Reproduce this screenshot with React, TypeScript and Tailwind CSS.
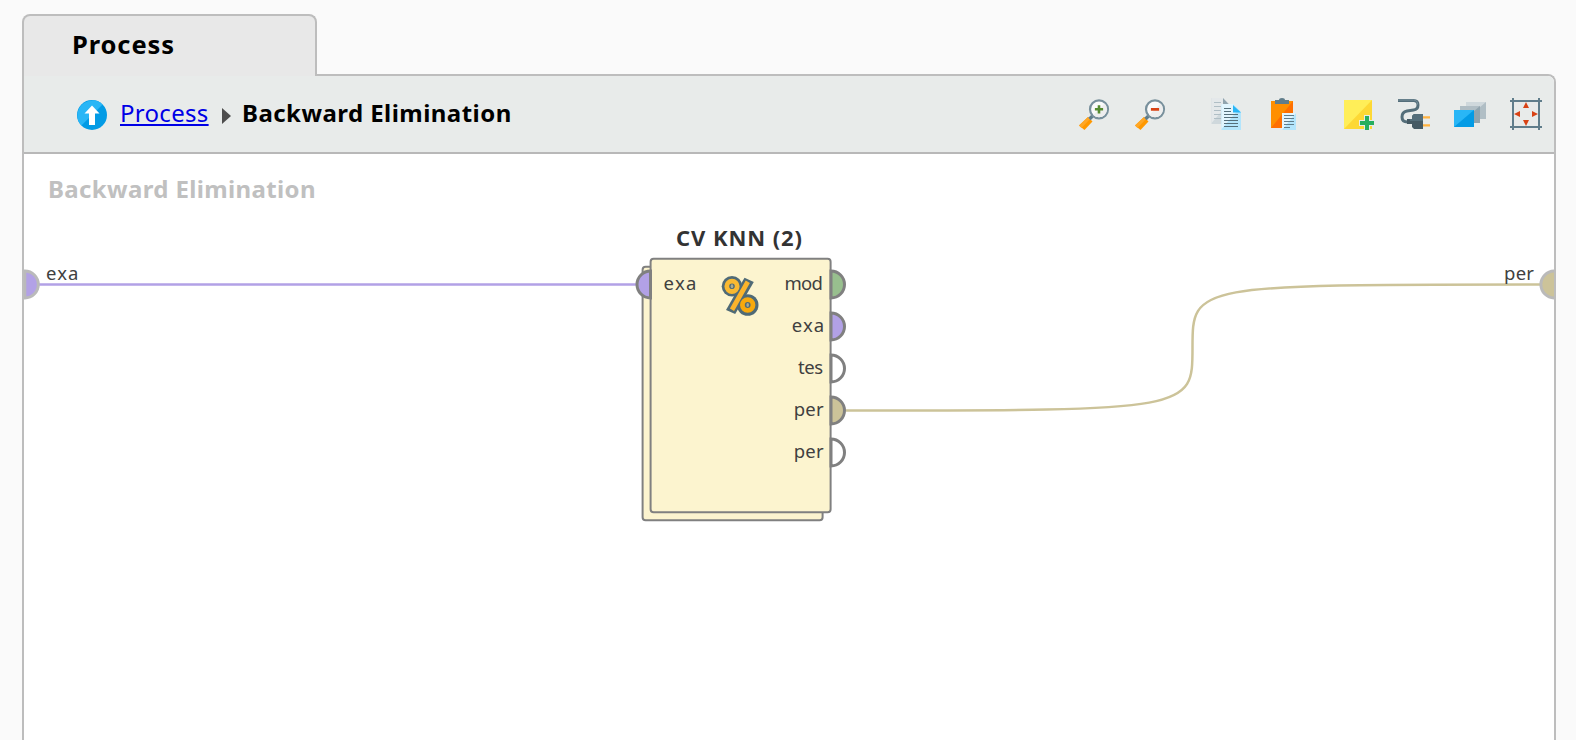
import type { ReactNode } from "react";

function Icon({ children }: { children: ReactNode }) {
  return (
    <svg className="size-8 shrink-0" viewBox="0 0 32 32" fill="none">
      {children}
    </svg>
  );
}

function Magnifier({ children }: { children: ReactNode }) {
  return (
    <Icon>
      <path d="M10 19 14.500 23.500 6.500 32 1 27.500z" fill="#ff9800" />
      <path d="M10 19 12 21 3.500 30 1 27.500z" fill="#ffa726" />
      <path d="m11.500 21 4-4" stroke="#607d8b" strokeWidth="3.4" />
      <circle cx="21" cy="11.3" r="9" fill="#fafafa" stroke="#78909c" strokeWidth="2.200" />
      <path d="M15.300 17a8 8 0 0 0 11.400-11.400z" fill="#eeeeee" />
      {children}
    </Icon>
  );
}

function Toolbar() {
  return (
    <div className="flex items-center gap-11">
      <div className="flex gap-6">
        <Magnifier>
          <path d="M21 7.2v8.2M16.9 11.3h8.2" stroke="#558b2f" strokeWidth="2.6" />
        </Magnifier>
        <Magnifier>
          <path d="M16.9 11.3h8.2" stroke="#d84315" strokeWidth="2.8" />
        </Magnifier>
      </div>
      <div className="flex gap-6">
        <Icon>
          <path d="M1.500 0H13l5.500 5.500V26h-17z" fill="#cfd8dc" />
          <path d="M1.500 0H13l5 6L1.500 25z" fill="#e4e8ea" />
          <path d="M13 0l5.500 6H13z" fill="#90a4ae" />
          <path d="M4 4.500h7M4 8.500h7M4 12.500h7M4 16.500h7M4 20.500h7" stroke="#b0bec5" />
          <path d="M11.500 6H23l8 8v18H11.500z" fill="#b3e5fc" />
          <path d="M11.500 6H23l5 6L11.500 31z" fill="#e1f5fe" />
          <path d="M23 7l8 7.500h-8z" fill="#29b6f6" />
          <path d="M14 10.500h7M14 13.500h7M14 16.500h14M14 19.500h14M14 22.500h14M14 25.500h14M14 28.500h14" stroke="#546e7a" />
        </Icon>
        <Icon>
          <path d="M5 3h22v27H5z" fill="#ff6f00" />
          <path d="M5 3h22L5 30z" fill="#ff8f00" />
          <path d="M9 2h4q0-2 3-2t3 2h4v4H9z" fill="#607d8b" />
          <path d="M16 15h14v17H16z" fill="#b3e5fc" />
          <path d="M16 15h14L16 32z" fill="#e1f5fe" />
          <path d="M18 17.500h10M18 20.500h10M18 23.500h10M18 26.500h10M18 29.500h6" stroke="#607d8b" />
        </Icon>
      </div>
      <div className="flex gap-6">
        <Icon>
          <path d="M2 2h28v29H2z" fill="#fdd835" />
          <path d="M2 2h28L2 31z" fill="#ffee58" />
          <path d="M22 17h6v5h5v6h-5v5h-6v-5h-5v-6h5z" fill="#e8ebea" />
          <path d="M23 18h4v5h5v4h-5v5h-4v-5h-5v-4h5z" fill="#27ae60" />
        </Icon>
        <Icon>
          <path d="M0 2.500h15.500q4.500 0 4.500 4.500t-4.500 5L9 13q-5 1-5 6t5.500 5h4" stroke="#546e7a" strokeWidth="3" />
          <path d="M0 2h15.500q4 0 4 4.500" stroke="#78909c" strokeWidth="1" />
          <path d="M24.500 19.400H32M24.500 27.400H32" stroke="#ffb340" strokeWidth="2.200" />
          <path d="M16 16h9v15h-9l-2-2v-3h-5v-5h5v-3z" fill="#455a64" />
          <path d="M16 16h9v7H12v-2h2v-3z" fill="#546e7a" />
        </Icon>
        <Icon>
          <path d="M12 4h20v17H12z" fill="#b0bec5" />
          <path d="M12 4h20L12 21z" fill="#cfd8dc" />
          <path d="M6 8h20v17H6z" fill="#90a4ae" />
          <path d="M6 8h20L6 25z" fill="#b0bec5" />
          <path d="M0 12h20v17H0z" fill="#039be5" />
          <path d="M0 12h20L0 29z" fill="#29b6f6" />
        </Icon>
        <Icon>
          <path d="M0 3h32M0 29h32M3 0v32M29 0v32" stroke="#607d8b" strokeWidth="2" />
          <path d="m16 4 3 6h-6zM16 28l3-6h-6zM4 16l6-3v6zM28 16l-6-3v6z" fill="#d84315" />
        </Icon>
      </div>
    </div>
  );
}

const fills = {
  model: "#98bf8e",
  examples: "#b2a1e6",
  performance: "#ccc399",
  none: "#ffffff",
};

const outputs = [
  { y: 284.5, label: "mod", x: 784.5, width: 38.5, fill: fills.model },
  { y: 326.5, label: "exa", x: 791.7, width: 32.5, fill: fills.examples },
  { y: 368.5, label: "tes", x: 798, width: 25, fill: fills.none },
  { y: 410.5, label: "per", x: 793.7, width: 30, fill: fills.performance },
  { y: 452.5, label: "per", x: 793.7, width: 30, fill: fills.none },
];

function Canvas() {
  return (
    <svg className="block h-[586px] w-[1530px]" viewBox="24 154 1530 586">
      <g className='font-["Noto_Sans",sans-serif]'>
        <text x="48" y="198" fontSize="24" fontWeight="700" fill="#c0c0c0" textLength="267.500">
          Backward Elimination
        </text>
        <text x="676" y="246" fontSize="22" fontWeight="700" fill="#333333" textLength="126">
          CV KNN (2)
        </text>
      </g>
      <path d="M39 284.500H636" stroke="#b2a1e6" strokeWidth="2.500" />
      <path
        d="M846 410.500C1192.500 410.500 1192.500 410.500 1192.500 347.500S1192.500 284.500 1540 284.500"
        fill="none"
        stroke="#ccc399"
        strokeWidth="2.500"
      />
      <g fill="#fcf4cf" stroke="#808080" strokeWidth="2">
        <rect x="642.600" y="266.800" width="180" height="253.500" rx="3" />
        <rect x="650.600" y="258.800" width="180" height="253.500" rx="3" />
      </g>
      <path d="M650.500 271A13.500 13.500 0 0 0 650.500 298z" fill={fills.examples} stroke="#808080" strokeWidth="3" />
      {outputs.map((port) => (
        <g key={port.y} transform={`translate(831 ${port.y})`}>
          <path d="M0-13.500A13.500 13.500 0 0 1 0 13.500z" fill={port.fill} stroke="#808080" strokeWidth="3" />
        </g>
      ))}
      <path d="M24.800 271a13.500 13.500 0 0 1 0 27z" fill={fills.examples} stroke="#bababa" strokeWidth="3" />
      <path d="M1554.400 271a13.500 13.500 0 0 0 0 27" fill={fills.performance} stroke="#bababa" strokeWidth="3" />
      <g className='font-["Noto_Sans",sans-serif]' fontSize="18.500" fill="#404040">
        <text x="46" y="280" textLength="32.500">exa</text>
        <text x="1504" y="280" textLength="30">per</text>
        <text x="663.500" y="290" textLength="33">exa</text>
        {outputs.map((port) => (
          <text key={port.y} x={port.x} y={port.y + 5.5} textLength={port.width}>
            {port.label}
          </text>
        ))}
      </g>
      <g fill="#4f6a76">
        <circle cx="732" cy="286.300" r="10.300" />
        <circle cx="747.700" cy="305" r="10.800" />
        <path d="m744.500 277.800 9.300 4.200-18.600 32-9.200-4z" />
      </g>
      <g fill="none" strokeWidth="4.800">
        <circle cx="732" cy="286.300" r="5.200" stroke="#f9b931" />
        <path d="m747.800 281.800-15.800 28" stroke="#fbb42b" />
        <circle cx="747.700" cy="305" r="5.300" stroke="#f7a90c" />
      </g>
      <g fill="#a8ab92">
        <ellipse cx="732" cy="286.300" rx="1.300" ry="2" />
        <ellipse cx="747.700" cy="305" rx="1.300" ry="2" />
      </g>
    </svg>
  );
}

export default function App() {
  return (
    <div className='h-[740px] overflow-hidden bg-[#fafafa] pl-[22px] pt-[14px] font-["Noto_Sans",sans-serif] text-black'>
      <div className="relative z-10 -mb-0.5 flex h-[62px] w-[295px] items-center rounded-t-lg border-2 border-b-0 border-[#bdbdbd] bg-[#e8e8e8] pb-1 pl-[48px]">
        <span className="text-[25.5px] font-bold tracking-[0.9px]">Process</span>
      </div>
      <div className="w-[1534px] overflow-hidden rounded-tr-lg border-2 border-b-0 border-[#bdbdbd] bg-white">
        <header className="flex h-[78px] items-center justify-between border-b-2 border-[#b8b8b8] bg-[#e8ebea] pl-[53px] pr-3">
          <nav className="flex items-center">
            <svg className="mt-px size-[30px]" viewBox="0 0 30 30">
              <circle cx="15" cy="15" r="15" fill="#039be5" />
              <path d="M4.400 25.600A15 15 0 0 1 25.600 4.400z" fill="#29b6f6" />
              <path d="m15 5.500 7.500 8H18v11.500h-6V13.500H7.500z" fill="#fff" />
            </svg>
            <a className="mb-0.5 ml-[13px] w-[89px] text-2xl tracking-[0.3px] text-[#0000e6] underline decoration-2 underline-offset-2">
              Process
            </a>
            <svg className="ml-[13px] mt-1 h-4 w-[9px]" viewBox="0 0 9 16">
              <path d="M0 0 9 8 0 16z" fill="#4d4d4d" />
            </svg>
            <span className="mb-0.5 ml-[11px] whitespace-nowrap text-2xl font-bold tracking-[0.45px]">
              Backward Elimination
            </span>
          </nav>
          <Toolbar />
        </header>
        <Canvas />
      </div>
    </div>
  );
}
